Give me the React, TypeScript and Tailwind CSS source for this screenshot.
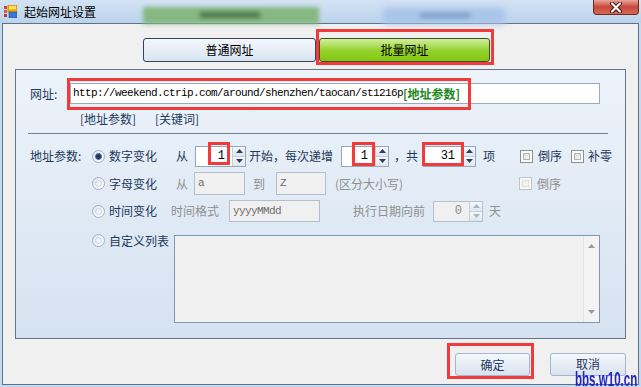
import React from "react";

function Radio({ checked }: { checked?: boolean }) {
  return (
    <div className="w-[13px] h-[13px] rounded-full border border-[#9fb1c7] bg-gradient-to-br from-[#dfe7f0] to-[#ffffff] flex items-center justify-center">
      {checked ? (
        <div className="w-[7px] h-[7px] rounded-full bg-[#1f3a62] border border-[#4f6d95]" />
      ) : (
        <div className="w-[7px] h-[7px] rounded-full bg-gradient-to-br from-[#e8eef5] to-[#f7f9fb] border border-[#c9d5e2]" />
      )}
    </div>
  );
}

function Check({ disabled }: { disabled?: boolean }) {
  return (
    <div
      className={
        disabled
          ? "w-[13px] h-[13px] border border-[#c4c4c4] bg-[#f7f7f7] p-[2px]"
          : "w-[13px] h-[13px] border border-[#8e8f8f] bg-[#fbfbfb] p-[2px]"
      }
    >
      <div
        className={
          disabled
            ? "w-full h-full border border-[#dedede] bg-gradient-to-br from-[#ececec] to-[#f6f6f6]"
            : "w-full h-full border border-[#b4b4b4] bg-gradient-to-br from-[#dcdcdc] to-[#f4f4f4]"
        }
      />
    </div>
  );
}

function Arrow({ up, disabled }: { up?: boolean; disabled?: boolean }) {
  return (
    <svg width="7" height="4" viewBox="0 0 7 4">
      <path
        d={up ? "M0 4 L3.5 0 L7 4 Z" : "M0 0 L3.5 4 L7 0 Z"}
        fill={disabled ? "#a9b4c2" : "#2a3f5c"}
      />
    </svg>
  );
}

function Spin({
  cls,
  value,
  disabled,
}: {
  cls: string;
  value: string;
  disabled?: boolean;
}) {
  return (
    <div
      className={
        (disabled
          ? "border-[#b5c1d0] bg-[#f0f0f0] text-[#8a8a8a] "
          : "border-[#95a7be] bg-white text-black ") +
        "flex h-[21px] border " +
        cls
      }
    >
      <div className="flex-1 flex items-center justify-end pr-[7px] font-['Liberation_Mono',monospace] text-[12px]">
        {value}
      </div>
      <div className="w-[13px] flex flex-col border-l border-[#c5d0dd]">
        <div className="flex-1 flex items-center justify-center bg-gradient-to-b from-[#f6f8fb] to-[#dfe6ef] border-b border-[#c5d0dd]">
          <Arrow up disabled={disabled} />
        </div>
        <div className="flex-1 flex items-center justify-center bg-gradient-to-b from-[#f6f8fb] to-[#dfe6ef]">
          <Arrow disabled={disabled} />
        </div>
      </div>
    </div>
  );
}

function Box({ cls, value }: { cls: string; value: string }) {
  return (
    <div
      className={
        "flex items-center pl-[3px] border border-[#b3bfce] bg-[#f0f0f0] text-[#6e6e6e] font-['Liberation_Mono',monospace] text-[11px] tracking-[-0.6px] " +
        cls
      }
    >
      {value}
    </div>
  );
}

function RedBox({ cls }: { cls: string }) {
  return (
    <div
      className={
        "absolute border-[3px] border-[#f23a3a] pointer-events-none " + cls
      }
    />
  );
}

export default function App() {
  return (
    <div className="w-[641px] h-[387px] bg-[#c3d9ef] relative overflow-hidden font-['Noto_Sans_CJK_SC',sans-serif] text-[12px] leading-none">
      {/* Title bar */}
      <div className="h-[23px] relative flex items-center bg-gradient-to-b from-[#d3e3f4] to-[#bcd3ec]">
        <div className="absolute left-[143px] top-[7px] w-[176px] h-[17px] bg-[#86b882] blur-[2px]" />
        <div className="absolute left-[200px] top-[12px] w-[60px] h-[6px] bg-[#4f7a50] blur-[2px]" />
        <div className="absolute left-[383px] top-[8px] w-[122px] h-[16px] bg-[#a9c5e8] blur-[3px]" />
        <div className="absolute left-[420px] top-[13px] w-[50px] h-[5px] bg-[#7f9ecb] blur-[2px]" />
        <svg
          className="relative ml-[4px]"
          width="13"
          height="13"
          viewBox="0 0 13 13"
        >
          <rect x="0" y="1" width="3" height="3" fill="#e03a2a" />
          <rect x="0" y="5" width="3" height="3" fill="#e05a2a" />
          <rect x="0" y="9" width="3" height="3" fill="#d03030" />
          <rect x="4" y="0" width="9" height="7" fill="#f0b400" stroke="#b07000" strokeWidth="0.6" />
          <rect x="5" y="1" width="7" height="3" fill="#ffe060" />
          <rect x="5" y="7" width="8" height="6" fill="#3a78d8" stroke="#1d4fa0" strokeWidth="0.6" />
        </svg>
        <span className="relative ml-[7px] text-black text-[12px]">
          起始网址设置
        </span>
        <div className="absolute left-[593px] top-0 w-[46px] h-[15px] rounded-b-[4px] border border-t-0 border-[#74291f] bg-gradient-to-b from-[#e9a395] via-[#c8473a] to-[#d66a5a] flex items-center justify-center">
          <svg width="14" height="11" viewBox="0 0 14 11">
            <path d="M3 1.5 L11 9.5 M11 1.5 L3 9.5" stroke="#3b1410" strokeWidth="4" strokeLinecap="round" />
            <path d="M3 1.5 L11 9.5 M11 1.5 L3 9.5" stroke="#ffffff" strokeWidth="2.2" strokeLinecap="round" />
          </svg>
        </div>
      </div>

      {/* Client area */}
      <div className="ml-[2px] w-[637px] h-[362px] border border-[#617287] bg-[#f0f0f0] flex flex-col">
        {/* Tabs */}
        <div className="mt-[14px] flex pl-[140px] gap-[3px]">
          <div className="w-[173px] h-[24px] rounded-[3px] border border-[#33435a] bg-gradient-to-b from-[#f4f7fb] to-[#d9e4f1] flex items-center justify-center text-black text-[12px]">
            普通网址
          </div>
          <div className="w-[171px] h-[24px] rounded-[3px] border border-[#3e4a33] bg-gradient-to-b from-[#d2ef96] via-[#95d32e] to-[#83c706] flex items-center justify-center text-black text-[12px]">
            批量网址
          </div>
        </div>

        {/* Panel */}
        <div className="mt-[7px] ml-[12px] w-[611px] h-[270px] border border-[#667589] bg-gradient-to-b from-[#edf3fa] to-[#d5e2f1] flex flex-col text-[#1e395b]">
          {/* URL row */}
          <div className="mt-[13px] flex items-center h-[21px]">
            <div className="ml-[14px] w-[40px]">网址:</div>
            <div className="w-[530px] h-[21px] border border-[#9aa9bd] bg-white flex items-center pl-[2px]">
              <span className="font-['Liberation_Mono',monospace] text-[11px] tracking-[-0.6px] text-black">
                http://weekend.ctrip.com/around/shenzhen/taocan/st1216p
              </span>
              <span className="text-[#22881e] font-bold text-[12px]">
                [地址参数]
              </span>
            </div>
          </div>

          {/* Links row */}
          <div className="mt-[7px] h-[16px] flex items-center pl-[64px]">
            <span className="w-[75px]">[地址参数]</span>
            <span>[关键词]</span>
          </div>

          {/* Separator */}
          <div className="mt-[6px] ml-[12px] w-[580px] h-px bg-[#6f8197]" />

          {/* Row 1 */}
          <div className="mt-[11px] h-[22px] flex items-center">
            <div className="ml-[14px] w-[62px]">地址参数:</div>
            <div className="w-[17px]">
              <Radio checked />
            </div>
            <div className="w-[67px]">数字变化</div>
            <div className="w-[344px] flex items-center">
              <span>从</span>
              <Spin cls="ml-[7px] w-[51px]" value="1" />
              <span className="ml-[3px]">开始，每次递增</span>
              <Spin cls="ml-[8px] w-[48px]" value="1" />
              <span className="ml-[5px]">，共</span>
              <Spin cls="ml-[5px] w-[53px]" value="31" />
              <span className="ml-[7px]">项</span>
            </div>
            <Check />
            <span className="ml-[5px]">倒序</span>
            <div className="ml-[9px]">
              <Check />
            </div>
            <span className="ml-[4px]">补零</span>
          </div>

          {/* Row 2 */}
          <div className="mt-[5px] h-[23px] flex items-center">
            <div className="ml-[14px] w-[62px]" />
            <div className="w-[17px]">
              <Radio />
            </div>
            <div className="w-[67px]">字母变化</div>
            <div className="w-[343px] flex items-center text-[#8f8f8f]">
              <span>从</span>
              <Box cls="ml-[6px] w-[51px] h-[23px]" value="a" />
              <span className="ml-[8px]">到</span>
              <Box cls="ml-[11px] w-[50px] h-[23px]" value="Z" />
              <span className="ml-[9px]">(区分大小写)</span>
            </div>
            <Check disabled />
            <span className="ml-[5px] text-[#8f8f8f]">倒序</span>
          </div>

          {/* Row 3 */}
          <div className="mt-[5px] h-[22px] flex items-center">
            <div className="ml-[14px] w-[62px]" />
            <div className="w-[17px]">
              <Radio />
            </div>
            <div className="w-[62px]">时间变化</div>
            <span className="text-[#8f8f8f]">时间格式</span>
            <Box cls="ml-[10px] w-[91px] h-[22px]" value="yyyyMMdd" />
            <span className="ml-[33px] text-[#8f8f8f]">执行日期向前</span>
            <Spin cls="ml-[8px] w-[50px]" value="0" disabled />
            <span className="ml-[6px] text-[#8f8f8f]">天</span>
          </div>

          {/* Row 4 */}
          <div className="mt-[13px] flex items-start">
            <div className="ml-[14px] w-[62px]" />
            <div className="h-[11px] flex items-center">
              <div className="w-[17px]">
                <Radio />
              </div>
              <div className="w-[65px]">自定义列表</div>
            </div>
            <div className="w-[426px] h-[88px] border border-[#8197b1] bg-[#f0f0f0] flex justify-end">
              <div className="w-[16px] h-full border-l border-[#e2e2e2] bg-[#f3f3f3] flex flex-col items-center justify-between py-[8px]">
                <svg width="7" height="4" viewBox="0 0 7 4">
                  <path d="M0 4 L3.5 0 L7 4 Z" fill="#9a9a9a" />
                </svg>
                <svg width="7" height="4" viewBox="0 0 7 4">
                  <path d="M0 0 L3.5 4 L7 0 Z" fill="#9a9a9a" />
                </svg>
              </div>
            </div>
          </div>
        </div>

        {/* Buttons */}
        <div className="mt-[14px] flex justify-end pr-[12px] gap-[20px]">
          <div className="w-[75px] h-[23px] rounded-[3px] border border-[#a3b6cd] bg-gradient-to-b from-[#f5f8fc] to-[#d9e3ef] flex items-center justify-center text-[#1e395b]">
            确定
          </div>
          <div className="w-[76px] h-[23px] rounded-[3px] border border-[#a3b6cd] bg-gradient-to-b from-[#f5f8fc] to-[#d9e3ef] flex items-center justify-center text-[#1e395b] pb-[2px]">
            取消
          </div>
        </div>
      </div>

      {/* Red highlight boxes */}
      <RedBox cls="left-[316px] top-[29px] w-[178px] h-[36px]" />
      <RedBox cls="left-[67px] top-[78px] w-[404px] h-[32px]" />
      <RedBox cls="left-[208px] top-[142px] w-[22px] h-[23px]" />
      <RedBox cls="left-[352px] top-[142px] w-[23px] h-[24px]" />
      <RedBox cls="left-[422px] top-[142px] w-[42px] h-[24px]" />
      <RedBox cls="left-[447px] top-[343px] w-[87px] h-[36px]" />

      {/* Watermark */}
      <div className="absolute left-[575px] top-[370px] h-[17px] origin-left scale-x-[0.55] font-['Liberation_Sans',sans-serif] font-bold text-[21px] leading-[17px] text-[#2424c8] whitespace-nowrap">
        bbs.w10.cn
      </div>
    </div>
  );
}
